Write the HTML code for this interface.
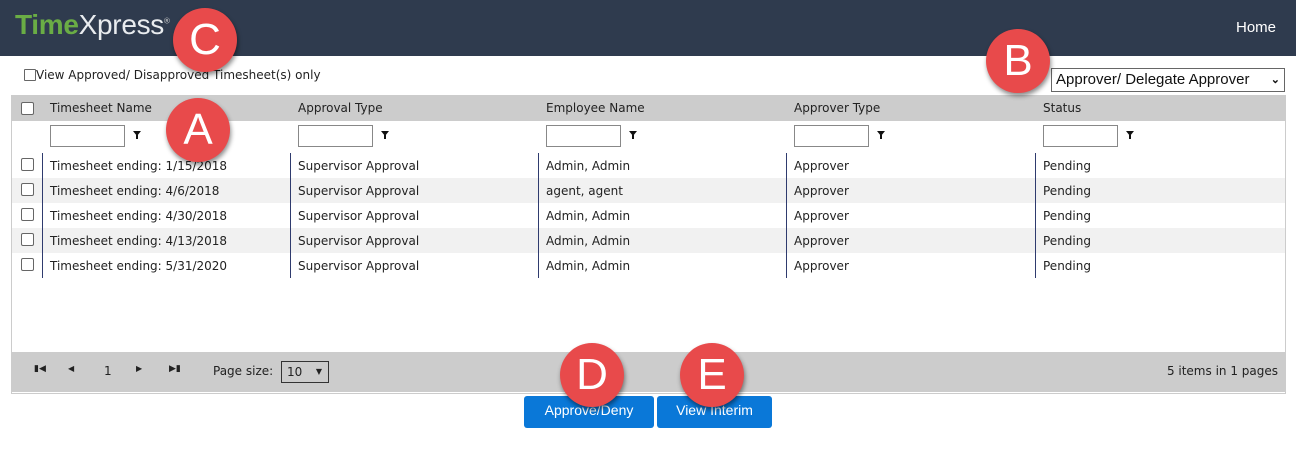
<!DOCTYPE html>
<html><head><style>
*{box-sizing:border-box}
body{margin:0;width:1296px;height:463px;background:#fff;font-family:"DejaVu Sans","Liberation Sans",sans-serif;font-size:12px;color:#222;position:relative;overflow:hidden}
.hdr{position:absolute;left:0;top:0;width:1296px;height:56px;background:#2f3b4e}
.logo{position:absolute;left:15px;top:9px;font-family:"Liberation Sans",sans-serif;font-size:28px;letter-spacing:-0.3px}
.home{position:absolute;right:20px;top:19px;color:#fff;font-family:"Liberation Sans",sans-serif;font-size:15px}
.abs{position:absolute}
.grid{position:absolute;left:11px;top:95px;width:1275px;height:299px;border:1px solid #ccc;border-top:none}
.hrow{position:absolute;left:0;top:0;width:100%;height:26px;background:#cccccc}
.cb{position:absolute;width:13px;height:13px;border:1px solid #666;border-radius:2px;background:#fff}
.row{position:absolute;left:0;width:100%;height:25px}
.alt{background:#f1f1f1}
.div{position:absolute;width:1px;height:25px;background:#2f3b6e;top:0}
.t{position:absolute;white-space:nowrap}
.fi{position:absolute;width:75px;height:22px;border:1px solid #888;background:#fff;top:30px}
.fl{position:absolute;top:36px;width:0;height:0;border-left:4px solid transparent;border-right:4px solid transparent;border-top:5px solid #111}
.fl:after{content:"";position:absolute;left:-1px;top:-1px;width:2px;height:4px;background:#111}
.pager{position:absolute;left:0;top:257px;width:100%;height:40px;background:#cccccc}
.btn{position:absolute;top:396px;height:32px;background:#0a78d8;color:#fff;border-radius:3px;font-family:"Liberation Sans",sans-serif;font-size:14px;text-align:center;line-height:29px}
.circ{position:absolute;width:64px;height:64px;border-radius:50%;background:#e84a4b;color:#fff;font-family:"Liberation Sans",sans-serif;font-size:44px;text-align:center;line-height:64px;box-shadow:1px 3px 5px rgba(0,0,0,.45)}
</style></head><body>
<div class="hdr">
<div class="logo"><span style="color:#6aad45;font-weight:bold">Time</span><span style="color:#e9ecef">Xpress</span><sup style="font-size:8px;color:#ccc">®</sup></div>
<div class="home">Home</div>
</div>
<div class="abs" style="left:24px;top:67px;font-size:12px"><span class="cb" style="position:relative;display:inline-block;top:2px;width:12px;height:12px;border-radius:1px"></span>View Approved/ Disapproved Timesheet(s) only</div>
<div class="abs" style="left:1051px;top:68px;width:234px;height:24px;border:1px solid #666;font-family:'Liberation Sans',sans-serif;font-size:15px;line-height:22px;padding-left:4px;color:#111">Approver/ Delegate Approver <span style="position:absolute;right:4px;font-size:11px;font-weight:bold">&#8964;</span></div>
<div class="grid">
<div class="hrow">
<div class="cb" style="left:9px;top:7px"></div>
<div class="t" style="left:38px;top:6px">Timesheet Name</div>
<div class="t" style="left:286px;top:6px">Approval Type</div>
<div class="t" style="left:534px;top:6px">Employee Name</div>
<div class="t" style="left:782px;top:6px">Approver Type</div>
<div class="t" style="left:1031px;top:6px">Status</div>
</div>
<div class="fi" style="left:38px"></div><div class="fl" style="left:121px"></div>
<div class="fi" style="left:286px"></div><div class="fl" style="left:369px"></div>
<div class="fi" style="left:534px"></div><div class="fl" style="left:617px"></div>
<div class="fi" style="left:782px"></div><div class="fl" style="left:865px"></div>
<div class="fi" style="left:1031px"></div><div class="fl" style="left:1114px"></div>

<div class="row" style="top:58px"><div class="cb" style="left:9px;top:5px"></div><div class="div" style="left:30px"></div><div class="t" style="left:38px;top:6px">Timesheet ending: 1/15/2018</div><div class="div" style="left:278px"></div><div class="t" style="left:286px;top:6px">Supervisor Approval</div><div class="div" style="left:526px"></div><div class="t" style="left:534px;top:6px">Admin, Admin</div><div class="div" style="left:774px"></div><div class="t" style="left:782px;top:6px">Approver</div><div class="div" style="left:1023px"></div><div class="t" style="left:1031px;top:6px">Pending</div></div>
<div class="row alt" style="top:83px"><div class="cb" style="left:9px;top:5px"></div><div class="div" style="left:30px"></div><div class="t" style="left:38px;top:6px">Timesheet ending: 4/6/2018</div><div class="div" style="left:278px"></div><div class="t" style="left:286px;top:6px">Supervisor Approval</div><div class="div" style="left:526px"></div><div class="t" style="left:534px;top:6px">agent, agent</div><div class="div" style="left:774px"></div><div class="t" style="left:782px;top:6px">Approver</div><div class="div" style="left:1023px"></div><div class="t" style="left:1031px;top:6px">Pending</div></div>
<div class="row" style="top:108px"><div class="cb" style="left:9px;top:5px"></div><div class="div" style="left:30px"></div><div class="t" style="left:38px;top:6px">Timesheet ending: 4/30/2018</div><div class="div" style="left:278px"></div><div class="t" style="left:286px;top:6px">Supervisor Approval</div><div class="div" style="left:526px"></div><div class="t" style="left:534px;top:6px">Admin, Admin</div><div class="div" style="left:774px"></div><div class="t" style="left:782px;top:6px">Approver</div><div class="div" style="left:1023px"></div><div class="t" style="left:1031px;top:6px">Pending</div></div>
<div class="row alt" style="top:133px"><div class="cb" style="left:9px;top:5px"></div><div class="div" style="left:30px"></div><div class="t" style="left:38px;top:6px">Timesheet ending: 4/13/2018</div><div class="div" style="left:278px"></div><div class="t" style="left:286px;top:6px">Supervisor Approval</div><div class="div" style="left:526px"></div><div class="t" style="left:534px;top:6px">Admin, Admin</div><div class="div" style="left:774px"></div><div class="t" style="left:782px;top:6px">Approver</div><div class="div" style="left:1023px"></div><div class="t" style="left:1031px;top:6px">Pending</div></div>
<div class="row" style="top:158px"><div class="cb" style="left:9px;top:5px"></div><div class="div" style="left:30px"></div><div class="t" style="left:38px;top:6px">Timesheet ending: 5/31/2020</div><div class="div" style="left:278px"></div><div class="t" style="left:286px;top:6px">Supervisor Approval</div><div class="div" style="left:526px"></div><div class="t" style="left:534px;top:6px">Admin, Admin</div><div class="div" style="left:774px"></div><div class="t" style="left:782px;top:6px">Approver</div><div class="div" style="left:1023px"></div><div class="t" style="left:1031px;top:6px">Pending</div></div>

<div class="pager">
<div class="t" style="left:22px;top:12px;font-size:9px">&#9646;&#9664;</div>
<div class="t" style="left:56px;top:12px;font-size:8px">&#9664;</div>
<div class="t" style="left:92px;top:12px">1</div>
<div class="t" style="left:124px;top:12px;font-size:8px">&#9654;</div>
<div class="t" style="left:157px;top:12px;font-size:9px">&#9654;&#9646;</div>
<div class="t" style="left:201px;top:12px">Page size:</div>
<div class="abs" style="left:269px;top:9px;width:48px;height:22px;border:1px solid #333;padding-left:5px;line-height:20px">10<span style="position:absolute;right:6px;font-size:8px">&#9660;</span></div>
<div class="t" style="right:7px;top:12px">5 items in 1 pages</div>
</div>
</div>
<div class="btn" style="left:524px;width:130px">Approve/Deny</div>
<div class="btn" style="left:657px;width:115px">View Interim</div>
<div class="circ" style="left:173px;top:8px">C</div>
<div class="circ" style="left:166px;top:98px">A</div>
<div class="circ" style="left:986px;top:29px">B</div>
<div class="circ" style="left:560px;top:343px">D</div>
<div class="circ" style="left:680px;top:343px">E</div>
</body></html>
